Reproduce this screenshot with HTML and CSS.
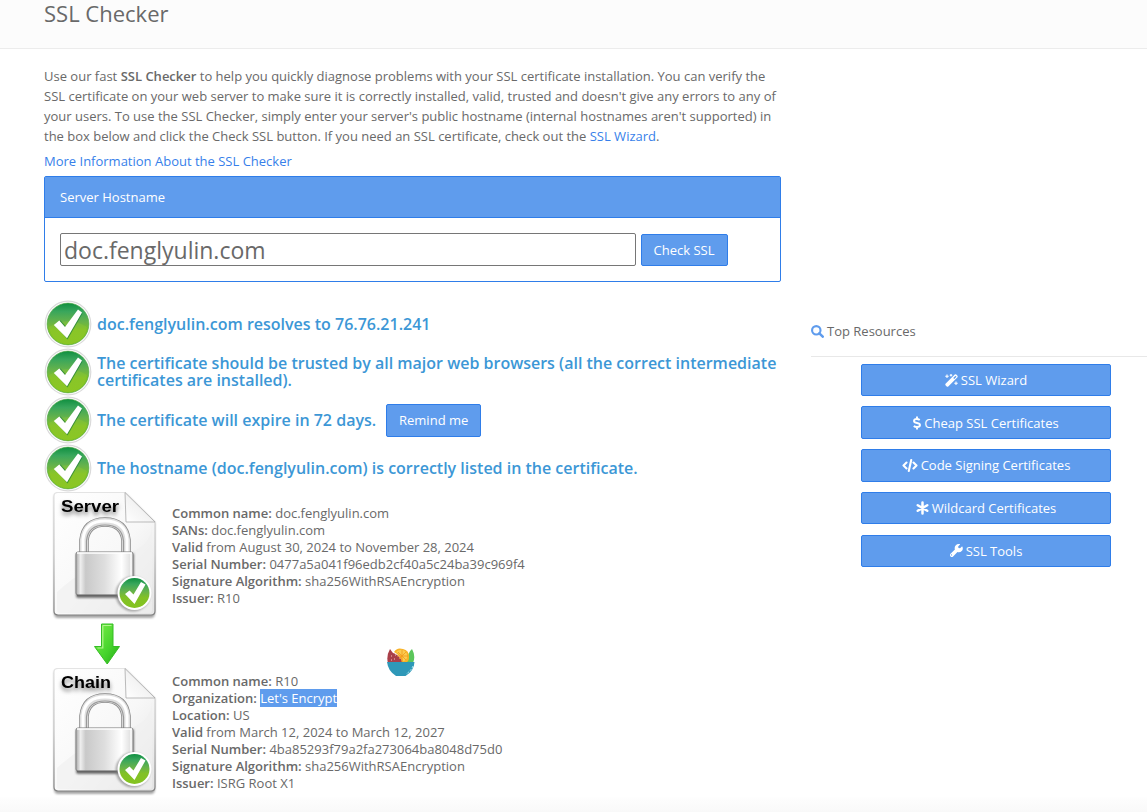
FILE: index.html
```html
<!DOCTYPE html>
<html lang="en">
<head>
<meta charset="utf-8">
<title>SSL Checker</title>
<link rel="stylesheet" href="styles.css">
</head>
<body>
<svg class="defs" aria-hidden="true">
  <defs>
    <linearGradient id="green" x1="0" y1="0" x2="0" y2="1">
      <stop offset="0" stop-color="#0f8f40"/><stop offset=".2" stop-color="#39a65c"/><stop offset=".45" stop-color="#67b34a"/><stop offset=".65" stop-color="#82c126"/><stop offset="1" stop-color="#84c320"/>
    </linearGradient>
    <linearGradient id="paper" x1="0" y1="0" x2="1" y2="1">
      <stop offset="0" stop-color="#fff"/><stop offset=".55" stop-color="#f8f8f8"/><stop offset="1" stop-color="#e3e3e3"/>
    </linearGradient>
    <linearGradient id="edge" x1="0" y1="0" x2="0" y2="1">
      <stop offset="0" stop-color="#e4e4e4"/><stop offset=".5" stop-color="#c4c4c4"/><stop offset="1" stop-color="#808080"/>
    </linearGradient>
    <linearGradient id="fold" x1="0" y1="1" x2="1" y2="0">
      <stop offset="0" stop-color="#fff"/><stop offset=".5" stop-color="#f2f2f2"/><stop offset="1" stop-color="#c8c8c8"/>
    </linearGradient>
    <linearGradient id="steel" x1="0" y1="0" x2="1" y2="0">
      <stop offset="0" stop-color="#aaa"/><stop offset=".08" stop-color="#eee"/><stop offset=".17" stop-color="#c9c9c9"/><stop offset=".5" stop-color="#dedede"/><stop offset=".8" stop-color="#fff"/><stop offset="1" stop-color="#d8d8d8"/>
    </linearGradient>
    <linearGradient id="arrow" x1="0" y1="0" x2="1" y2="1">
      <stop offset="0" stop-color="#7df04a"/><stop offset=".6" stop-color="#45d32c"/><stop offset="1" stop-color="#25a816"/>
    </linearGradient>
    <filter id="soft" x="-20%" y="-20%" width="150%" height="160%"><feGaussianBlur stdDeviation="1.3"/></filter>
    <symbol id="check" viewBox="0 0 48 48">
      <circle cx="24" cy="24" r="22.8" fill="#fff" stroke="#dadada" stroke-width="1.2"/>
      <circle cx="24" cy="24" r="20.9" fill="url(#green)" stroke="#48a53a" stroke-width=".6"/>
      <path d="M5 27Q24 15 43 27Q40 43 24 44Q8 43 5 27Z" fill="#a0d52f" opacity=".25"/>
      <path d="M11 25L16.500 20.500L22.500 27L35 10.500L38.500 13.500L23.500 39.500Z" fill="#16783a" opacity=".65"/>
      <path d="M9.800 25L15.300 20.500L21 27L34 9.500L38 12.500L23 38.300Z" fill="#fff"/>
    </symbol>
    <symbol id="cert" viewBox="0 0 110 128">
      <path d="M8 2H76L105 31V121Q105 126 101 126H8Q4 126 4 121V5Q4 2 8 2Z" fill="#777" opacity=".65" filter="url(#soft)"/>
      <path d="M8 .5H75L105 30V119Q105 123 101 123H8Q4 123 4 119V4Q4 .5 8 .5Z" fill="url(#paper)" stroke="url(#edge)" stroke-width="1.2"/>
      <path d="M102 34Q101 55 75 62Q40 70 7 100V118Q7 121 10 121H100Q102 121 102 118Z" fill="#f0f0f0" opacity=".65"/>
      <path d="M75 .5L105 30H76Z" fill="url(#fold)" stroke="#aaa" stroke-width=".8"/>
      <g fill="none">
        <path d="M34 61V48Q36 30 55 30Q74 30 76 48V61" stroke="#888" stroke-width="9.500"/>
        <path d="M34 61V48Q36 30 55 30Q74 30 76 48V61" stroke="#dedede" stroke-width="8"/>
        <path d="M33 61V47Q35 29 55 29Q75 29 77 47V61" stroke="#fff" stroke-width="3"/>
        <path d="M36.500 61V49Q38 33 55 33Q72 33 73.500 49V61" stroke="#999" stroke-width="1.2"/>
      </g>
      <rect x="26" y="61" width="58" height="45" rx="2" fill="#777" filter="url(#soft)"/>
      <rect x="26" y="60" width="57" height="43" rx="2" fill="url(#steel)" stroke="#858585"/>
      <path d="M27 61H82M81 61V102" stroke="#fff" stroke-width="1.3"/>
      <path d="M27 103.5H82" stroke="#666" stroke-width="1.5"/>
      <circle cx="83" cy="102" r="17.5" fill="#777" opacity=".6" filter="url(#soft)"/>
      <circle cx="84.500" cy="101" r="17" fill="#fff"/>
      <circle cx="84.500" cy="101" r="15" fill="url(#green)"/>
      <path d="M75 102L79.5 98.500L83.500 102.500L91 90L95.500 92.500L84.500 112Z" fill="#fff"/>
    </symbol>
  </defs>
</svg>

<header class="page-head"><h1>SSL Checker</h1></header>
<div class="layout">
  <main class="main">
    <p class="intro"><span>Use our fast <b>SSL Checker</b> to help you quickly diagnose problems with your SSL certificate installation. You can verify the</span> <span>SSL certificate on your web server to make sure it is correctly installed, valid, trusted and doesn't give any errors to any of</span> <span>your users. To use the SSL Checker, simply enter your server's public hostname (internal hostnames aren't supported) in</span> <span>the box below and click the Check SSL button. If you need an SSL certificate, check out the <a>SSL Wizard</a>.</span></p>
    <p class="more"><a>More Information About the SSL Checker</a></p>
    <section class="panel">
      <div class="panel-head">Server Hostname</div>
      <div class="panel-body"><input class="host" type="text" value="doc.fenglyulin.com"><button class="btn check-btn">Check SSL</button></div>
    </section>
    <ul class="results">
      <li><svg class="ok"><use href="#check"/></svg><h3>doc.fenglyulin.com resolves to 76.76.21.241</h3></li>
      <li><svg class="ok"><use href="#check"/></svg><h3>The certificate should be trusted by all major web browsers (all the correct intermediate<br>certificates are installed).</h3></li>
      <li><svg class="ok"><use href="#check"/></svg><h3>The certificate will expire in 72 days.</h3><button class="btn remind">Remind me</button></li>
      <li><svg class="ok"><use href="#check"/></svg><h3>The hostname (doc.fenglyulin.com) is correctly listed in the certificate.</h3></li>
    </ul>
    <section class="cert">
      <svg class="cert-img" viewBox="0 0 110 128"><use href="#cert"/><text class="cert-label" x="11" y="20" textLength="58" lengthAdjust="spacingAndGlyphs">Server</text></svg>
      <div class="cert-text"><b>Common name:</b> doc.fenglyulin.com<br><b>SANs:</b> doc.fenglyulin.com<br><b>Valid</b> from August 30, 2024 to November 28, 2024<br><b>Serial Number:</b> 0477a5a041f96edb2cf40a5c24ba39c969f4<br><b>Signature Algorithm:</b> sha256WithRSAEncryption<br><b>Issuer:</b> R10</div>
    </section>
    <div class="link-row">
      <svg class="down" viewBox="0 0 28 42"><path d="M8.5 1H20V23.500H26.500L14.200 41L1.500 23.500H8.500Z" fill="url(#arrow)" stroke="#35bd25"/><path d="M9.800 2.500H18.500M9.800 2.500V25H4.500" fill="none" stroke="#b0f58d" stroke-width="1.200"/></svg>
      <svg class="bowl" viewBox="0 0 28 29"><path d="M1 15Q-1 8 3 1Q8 7 12 15Z" fill="#a93f49"/><path d="M26 15Q29 8 25 1Q21 4 19 15Z" fill="#5cc65b"/><path d="M3 5Q9 3 17 15H3Z" fill="#a93f49"/><path d="M7 4Q10 -1 16 1Q22 2 22 9Q22 13 20 14H15Q13 7 7 4Z" fill="#f8b227"/><path d="M9 4Q12 1 16 2Q21 4 20 10Q18 14 16 13Q15 7 9 4Z" fill="#fbcc51"/><path d="M15 2V14M10 8H21M11 4L19 12M19 4L12 11" stroke="#f39a1b" stroke-width=".8"/><path d="M4 8H5M7 11H8M4 12H5M8 7H9" stroke="#f4c7bb"/><path d="M0 14H27.500Q27 23 18.500 28H9Q1 23 0 14Z" fill="#2e98b8"/><path d="M26 18Q24 23 19 26" fill="none" stroke="#b7edf4" stroke-dasharray="2 1.500"/></svg>
    </div>
    <section class="cert chain">
      <svg class="cert-img" viewBox="0 0 110 128"><use href="#cert"/><text class="cert-label" x="11" y="20" textLength="50" lengthAdjust="spacingAndGlyphs">Chain</text></svg>
      <div class="cert-text"><b>Common name:</b> R10<br><b>Organization:</b> <mark>Let's Encrypt</mark><br><b>Location:</b> US<br><b>Valid</b> from March 12, 2024 to March 12, 2027<br><b>Serial Number:</b> 4ba85293f79a2fa273064ba8048d75d0<br><b>Signature Algorithm:</b> sha256WithRSAEncryption<br><b>Issuer:</b> ISRG Root X1</div>
    </section>
  </main>
  <aside class="side">
    <h2><svg class="search" viewBox="0 0 512 512"><circle cx="208" cy="208" r="166" fill="none" stroke="currentColor" stroke-width="84"/><path d="M330 330L462 462" stroke="currentColor" stroke-width="98" stroke-linecap="round"/></svg>Top Resources</h2>
    <nav>
      <a class="btn"><svg width="13" height="13" viewBox="0 0 26 26"><path d="M1 19.500L19.500 1Q21 0 22.500 1L25 3.500Q26 5 25 6.500L6.500 25Q5 26 3.500 25L1 22.500Q0 21 1 19.500ZM16.500 8L18.500 10L23 5.500L21 3.500Z" fill="currentColor" fill-rule="evenodd"/><path d="M4 1V8M.5 4.500H7.500M12 0V5M9.500 2.500H14.500M22 15V22M18.500 18.500H25.500" stroke="currentColor" stroke-width="2.200"/></svg>SSL Wizard</a>
      <a class="btn"><svg width="8" height="14" viewBox="0 0 16 28"><path d="M13.500 8Q11 6 7 6Q2 6 2 10Q2 13 8 14Q14 15 14 18Q14 22 8 22Q4 22 1.500 20M8 1V6M8 22V27" fill="none" stroke="currentColor" stroke-width="3.800"/></svg>Cheap SSL Certificates</a>
      <a class="btn"><svg width="16" height="13" viewBox="0 0 32 26"><path d="M9 7L3 13L9 19M23 7L29 13L23 19M18.500 2L13.500 24" fill="none" stroke="currentColor" stroke-width="4.200" stroke-linecap="round" stroke-linejoin="round"/></svg>Code Signing Certificates</a>
      <a class="btn"><svg width="13" height="14" viewBox="0 0 26 28"><path d="M13 3V25M3.500 8.500L22.500 19.500M22.500 8.500L3.500 19.500" stroke="currentColor" stroke-width="5" stroke-linecap="round"/></svg>Wildcard Certificates</a>
      <a class="btn"><svg width="13" height="13" viewBox="0 0 512 512"><path d="M508 109c-2-9-13-12-20-5l-74 74-68-11-11-68 74-74c7-7 4-18-5-20C347-10 284 6 240 50c-47 47-60 115-39 175L22 404c-29 29-29 76 0 105 29 29 76 29 105 0l179-179c60 22 128 8 176-39 44-44 60-124 26-182ZM64 472a24 24 0 1 1 0-48 24 24 0 0 1 0 48Z" transform="scale(.96)" fill="currentColor" fill-rule="evenodd"/></svg>SSL Tools</a>
    </nav>
  </aside>
</div>
<footer class="foot"></footer>
</body>
</html>
```

FILE: styles.css
```css
* { box-sizing: border-box; }
html, body { height: 812px; overflow: hidden; }
body { margin: 0; background: #fff; color: #696969; font: 13px/20px "Open Sans", sans-serif; }
h1, h2, h3, p, ul { margin: 0; padding: 0; }
b { font-weight: 600; }
a { color: #377fea; }
.defs { position: absolute; width: 0; height: 0; }
.page-head { height: 49px; padding-left: 44px; background: #fcfcfc; border-bottom: 1px solid #ececec; }
h1 { font-size: 22px; line-height: 26px; font-weight: 400; }
.layout { display: flex; height: 748px; padding-left: 44px; }
.main { width: 737px; padding-top: 17px; flex: none; }
.intro span { display: block; white-space: nowrap; }
.more { margin-top: 5px; }
.panel { height: 106px; margin-top: 5px; border: 1px solid #2f7de9; border-radius: 2px; }
.panel-head { height: 41px; padding: 0 15px; line-height: 41px; color: #fff; background: #5f9ced; border-bottom: 1px solid #2f7de9; }
.panel-body { display: flex; align-items: flex-end; gap: 5px; padding: 15px; }
.host { width: 576px; height: 33px; padding: 1px 3px; border: 1px solid #767676; border-radius: 2px; color: #696969; font: 23px/29px "Open Sans", sans-serif; outline: 0; }
.btn { display: flex; align-items: center; justify-content: center; padding: 0; border: 1px solid #2f7de9; border-radius: 2px; background: #5f9ced; color: #fff; font: 13px/20px "Open Sans", sans-serif; }
.check-btn { width: 87px; height: 32px; padding-right: 1px; }
.results { margin-top: 18px; list-style: none; }
.results li { display: flex; align-items: center; height: 48px; }
.ok { width: 48px; height: 48px; flex: none; }
h3 { margin-left: 5px; color: #3c97d6; font-size: 16px; line-height: 17px; font-weight: 600; white-space: nowrap; }
.remind { width: 95px; height: 33px; margin-left: 10px; }
.cert { display: flex; height: 128px; }
.cert-img { width: 110px; height: 128px; margin-left: 6px; flex: none; }
.cert-label { font: bold 17px "Liberation Sans", sans-serif; fill: #000; filter: drop-shadow(0 3px 2px rgba(0, 0, 0, .5)); }
.cert-text { margin-left: 12px; padding-top: 13px; line-height: 17px; white-space: nowrap; }
.chain .cert-text { padding-top: 5px; }
mark { color: #fff; background: #5f9ced; }
.link-row { display: flex; height: 48px; }
.down { width: 28px; height: 42px; margin: 3px 0 0 49px; }
.bowl { width: 28px; height: 29px; margin: 28px 0 0 266px; }
.side { flex: 1; margin-left: 30px; padding-top: 272px; }
h2 { height: 36px; display: flex; align-items: flex-start; border-bottom: 1px solid #e8e8e8; font-size: 13px; line-height: 20px; font-weight: 400; }
.search { width: 13px; height: 13px; margin: 4px 3px 0 0; color: #5f9ced; }
nav { display: flex; flex-direction: column; gap: 10.1px; padding: 6.8px 36px 0 50px; }
nav .btn { height: 32.6px; }
nav svg { margin-right: 3px; }
.foot { height: 15px; background: linear-gradient(#fefefe, #f9f9f9); }
```
